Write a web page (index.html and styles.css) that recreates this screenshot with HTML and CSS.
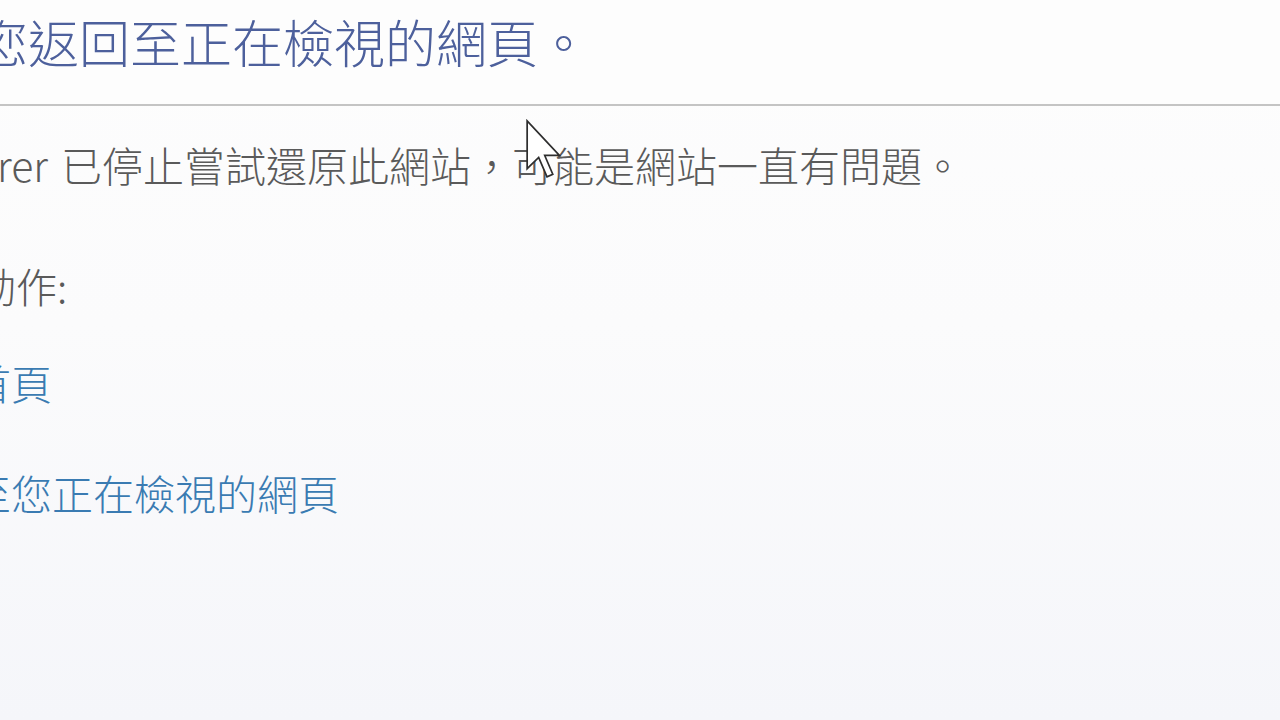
FILE: index.html
```html
<!DOCTYPE html>
<html lang="zh-TW">
<head>
<meta charset="utf-8">
<title>無法返回網頁</title>
<link rel="stylesheet" href="styles.css">
</head>
<body>
<div class="page">
  <header class="head">
    <h1 class="title"><span class="hang">我們無法讓您</span>返回至正在檢視的網頁。</h1>
  </header>
  <main class="content">
    <p class="line msg"><span class="hang gap">Internet Explorer</span>已停止嘗試還原此網站，可能是網站一直有問題。</p>
    <p class="line label"><span class="hang">您可以執行的動</span>作:</p>
    <ul class="actions">
      <li class="line item first"><a class="link" href="#"><span class="hang">移至首</span>頁</a></li>
      <li class="line item second"><a class="link" href="#"><span class="hang">重新載入至</span>您正在檢視的網頁</a></li>
    </ul>
  </main>
  <svg class="cursor" width="36" height="62" viewBox="0 0 12.5 21" aria-hidden="true">
    <polygon points="0.4,0.4 0.4,17 4.4,13.1 7.3,19.8 9.3,18.9 6.5,12.4 11.6,12.4" fill="#ffffff" stroke="#2e2e2e" stroke-width="0.6" stroke-linejoin="miter"/>
  </svg>
</div>
</body>
</html>
```

FILE: styles.css
```css
html, body {
  margin: 0;
  padding: 0;
  height: 100%;
  overflow: hidden;
}

body {
  font-family: "Noto Sans CJK TC", "Noto Sans", sans-serif;
  background: linear-gradient(to bottom, #fdfdfd 0%, #fbfbfc 45%, #f5f6fa 100%);
  color: #5a5a5a;
}

.page {
  position: relative;
  height: 720px;
}

.head {
  padding: 16px 0 37px 28px;
  border-bottom: 2px solid #c4c4c4;
  background: #fdfdfd;
}

.title {
  margin: 0;
  font-size: 51px;
  line-height: 51px;
  font-weight: 300;
  color: #4d609c;
  white-space: nowrap;
}

.hang {
  display: inline-block;
  width: 0;
  direction: rtl;
  white-space: nowrap;
}

.gap {
  padding-right: 13px;
}

.content {
  padding-top: 38px;
}

.line {
  margin: 0;
  font-size: 41px;
  line-height: 41px;
  font-weight: 300;
  white-space: nowrap;
}

.msg {
  padding-left: 48px;
}

.label {
  margin-top: 80px;
  padding-left: 16px;
}

.actions {
  list-style: none;
  margin: 0;
  padding: 0;
}

.item {
  padding-left: 11px;
}

.item.first {
  margin-top: 56px;
}

.item.second {
  margin-top: 69px;
}

.link {
  color: #3a7bb2;
  text-decoration: none;
}

.cursor {
  position: absolute;
  left: 526px;
  top: 119px;
}
```
